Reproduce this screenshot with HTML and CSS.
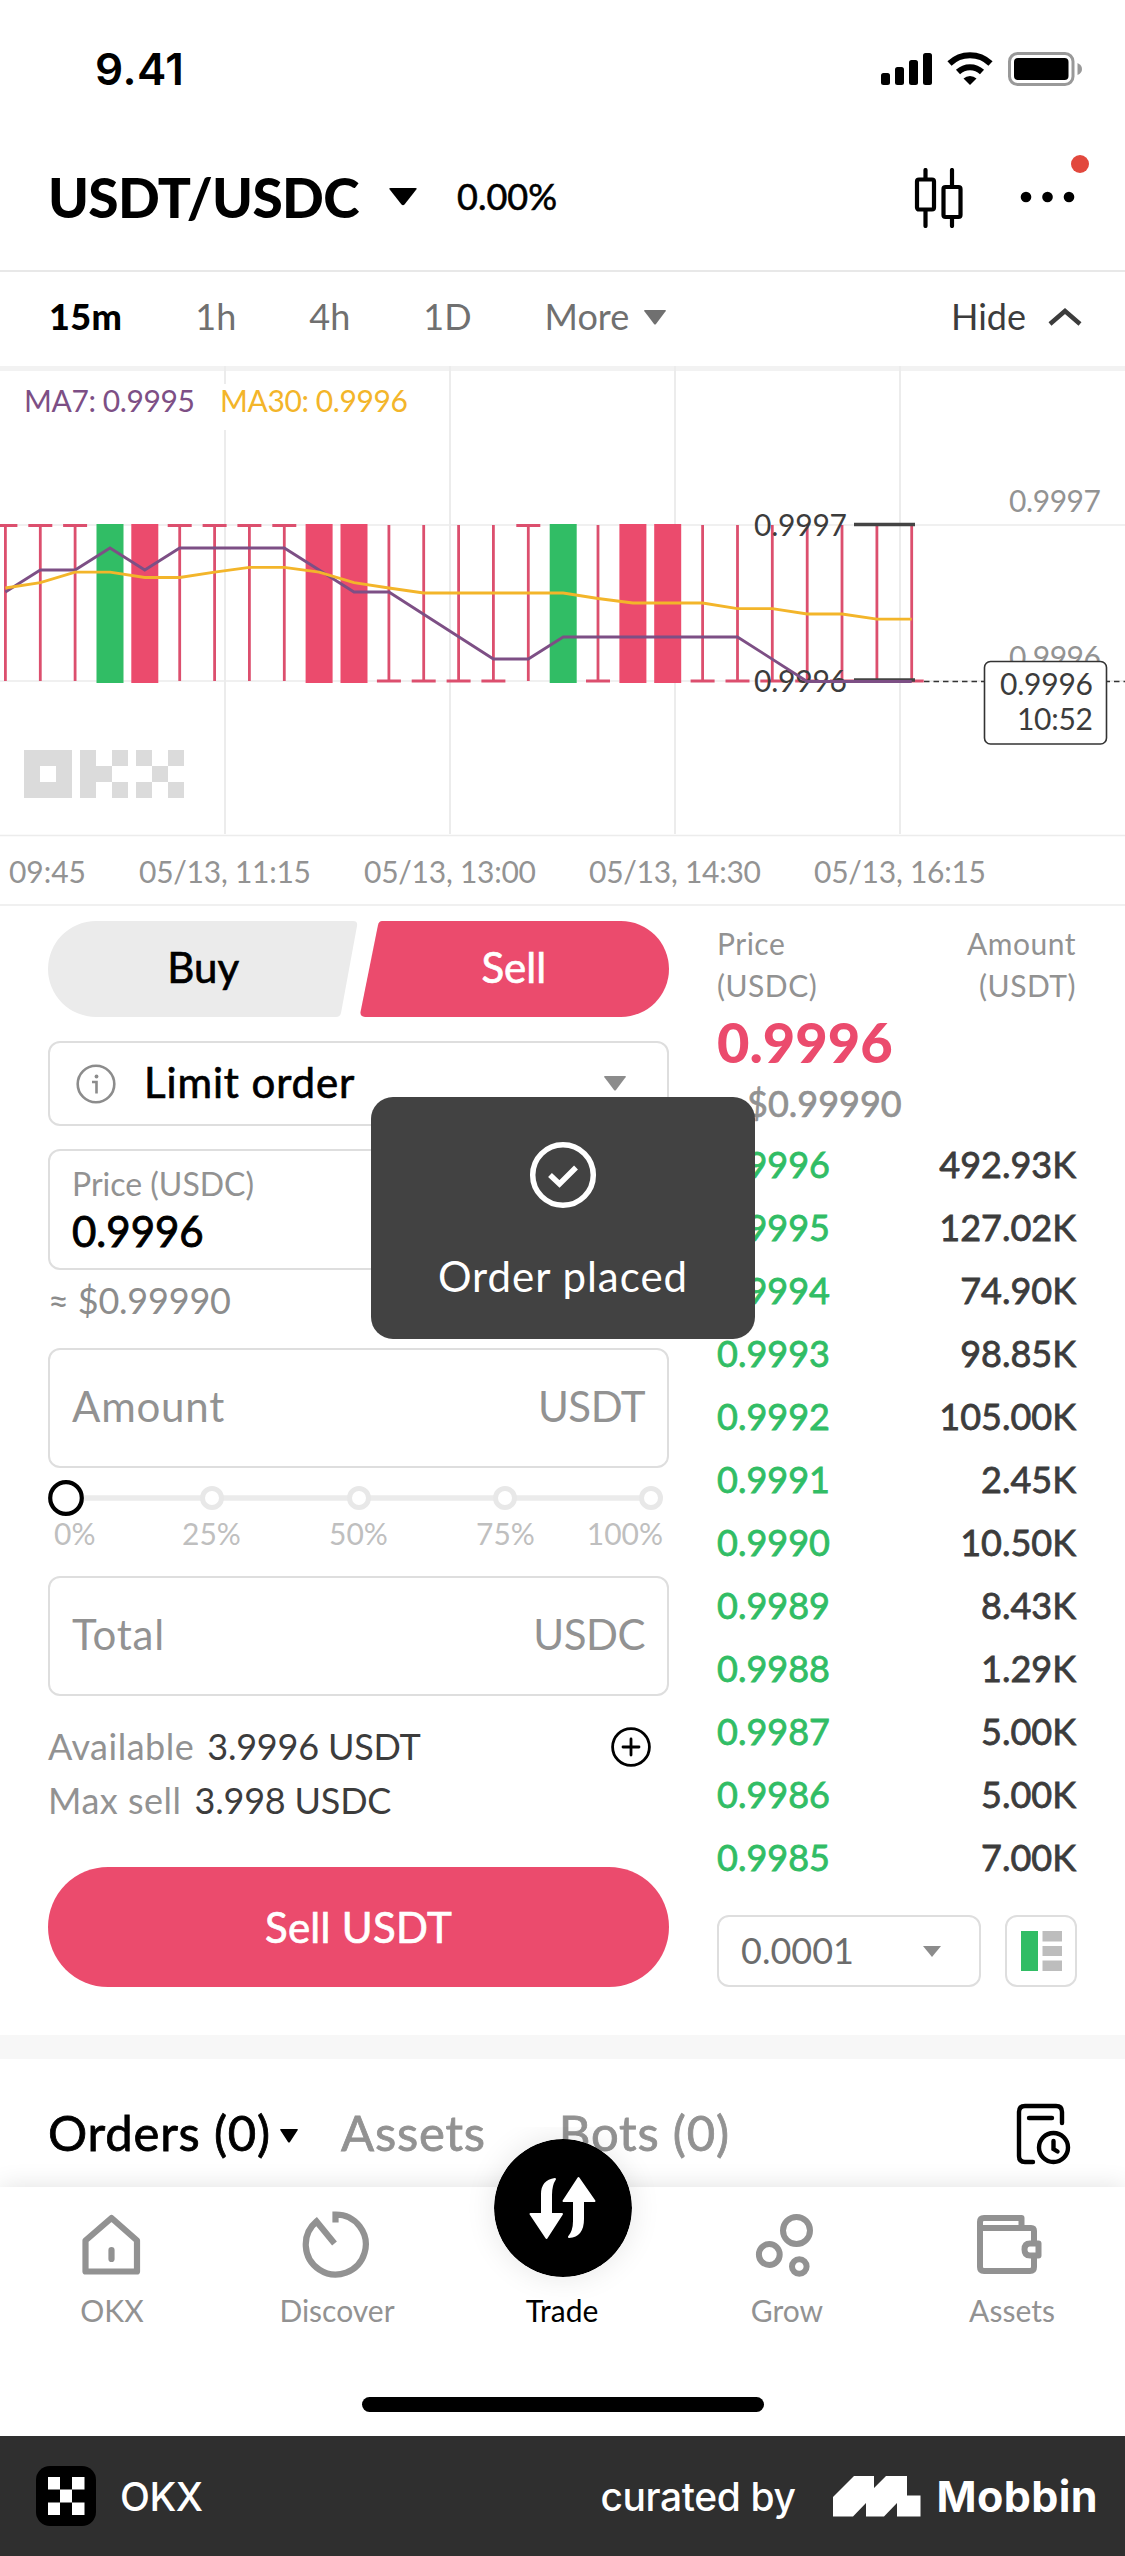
FILE: index.html
```html
<!DOCTYPE html>
<html lang="en">
<head>
  <meta charset="UTF-8">
  <title>USDT/USDC</title>
  <link rel="stylesheet" href="styles.css">
</head>
<body>
  <div class="status-bar">
    <span class="time">9.41</span>
    <svg class="status-icons" width="202" height="36" viewBox="0 0 202 36">
      <rect x="1" y="22" width="9" height="12" rx="2.5"/>
      <rect x="15" y="16" width="9" height="18" rx="2.5"/>
      <rect x="29" y="9" width="9" height="25" rx="2.5"/>
      <rect x="43" y="2" width="9" height="32" rx="2.5"/>
      <g fill="none" stroke="#000" stroke-width="6">
        <path d="M69.5 12.5a29.500 29.500 0 0 1 41 0"/>
        <path d="M78 21a17.500 17.500 0 0 1 24 0"/>
      </g>
      <path d="M83.500 27.500a9.500 9.500 0 0 1 13 0L90 34z"/>
      <rect x="129.500" y="2.500" width="63.500" height="31" rx="8" fill="none" stroke="#999" stroke-width="3"/>
      <rect x="134" y="7" width="54.500" height="22" rx="4"/>
      <path d="M197.500 12q4.500 2 4.500 6t-4.500 6z" fill="#999"/>
    </svg>
  </div>

  <header class="pair-header">
    <h1>USDT/USDC</h1>
    <svg class="pair-arrow" width="28" height="18" viewBox="0 0 28 18"><path d="M1.500 0h25q2 0 .8 1.600L15.500 16.500q-1.500 1.500-3 0L.7 1.600Q-.5 0 1.500 0z"/></svg>
    <span class="change">0.00%</span>
    <svg class="candle-icon" width="50" height="60" viewBox="0 0 50 60" fill="none" stroke="#000" stroke-width="4.200" stroke-linecap="round">
      <rect x="3" y="11.500" width="17" height="30" rx="2"/>
      <rect x="29.500" y="19" width="17" height="30" rx="2"/>
      <path d="M11.500 2v9M11.500 42v16M38 2v17M38 49v9"/>
    </svg>
    <svg class="more-icon" width="70" height="54" viewBox="0 0 70 54">
      <circle cx="7" cy="42" r="5.300"/>
      <circle cx="28.500" cy="42" r="5.300"/>
      <circle cx="50" cy="42" r="5.300"/>
      <circle cx="61" cy="9" r="9" fill="#e2483d"/>
    </svg>
  </header>

  <nav class="intervals">
    <span class="active">15m</span>
    <span>1h</span>
    <span>4h</span>
    <span>1D</span>
    <span>More</span>
    <svg class="more-arrow" width="22" height="15" viewBox="0 0 22 15"><path d="M1 0h20q1.500 0 .6 1.300L12 14q-1 1.200-2 0L.4 1.300Q-.5 0 1 0z" fill="#707070"/></svg>
    <span class="hide">Hide</span>
    <svg class="chevron" width="34" height="18" viewBox="0 0 34 18"><path d="M2 16 17 3l15 13" fill="none" stroke="#3c3c3c" stroke-width="4.500"/></svg>
  </nav>

  <svg class="chart" width="1125" height="540" viewBox="0 366 1125 540">
    <defs>
      <g id="top"><path d="M0 525V681" stroke-width="2.800"/><path d="M-12 525.500H12" stroke-width="3"/></g>
      <g id="low"><path d="M0 525V681" stroke-width="2.800"/><path d="M-12 681H12" stroke-width="3"/></g>
      <rect id="body" x="-13.500" y="524" width="27" height="159" stroke="none"/>
    </defs>
    <rect y="366" width="1125" height="5" fill="#f2f2f2"/>
    <!-- grid -->
    <g stroke="#ececec" stroke-width="2">
      <path d="M225 366V834M450 366V834M675 366V834M900 366V834"/>
      <path d="M0 525H1125M0 681H1125M0 835.500H1125M0 905H1125" stroke-width="1.500"/>
    </g>
    <rect x="14" y="384" width="404" height="46" fill="#fff"/>
    <g class="label">
      <text x="24" y="412" textLength="171" fill="#7d4f85">MA7: 0.9995</text>
      <text x="220" y="412" textLength="188" fill="#f3b52a">MA30: 0.9996</text>
    </g>
    <!-- watermark -->
    <path fill="#dbdbdb" fill-rule="evenodd" d="M24 750h48v48H24zM40 766v16h16v-16zM80 750h16v16h16v16H96v16H80zM112 750h16v16h-16zM112 782h16v16h-16zM136 750h16v16h-16zM168 750h16v16h-16zM152 766h16v16h-16zM136 782h16v16h-16zM168 782h16v16h-16z"/>
    <!-- candles -->
    <g stroke="#dc4f6e" fill="#eb4b6d">
      <use href="#top" x="5.400"/>
      <use href="#top" x="40.300"/>
      <use href="#top" x="75.100"/>
      <use href="#body" x="110" fill="#31bd65"/>
      <use href="#body" x="144.800"/>
      <use href="#top" x="179.700"/>
      <use href="#top" x="214.600"/>
      <use href="#top" x="249.400"/>
      <use href="#top" x="284.300"/>
      <use href="#body" x="319.100"/>
      <use href="#body" x="354"/>
      <use href="#low" x="388.900"/>
      <use href="#low" x="423.700"/>
      <use href="#low" x="458.600"/>
      <use href="#low" x="493.400"/>
      <use href="#top" x="528.300"/>
      <use href="#body" x="563.200" fill="#31bd65"/>
      <use href="#low" x="598"/>
      <use href="#body" x="632.900"/>
      <use href="#body" x="667.700"/>
      <use href="#low" x="702.600"/>
      <use href="#low" x="737.500"/>
      <use href="#low" x="772.300"/>
      <use href="#low" x="807.200"/>
      <use href="#low" x="842"/>
      <use href="#low" x="876.900"/>
      <use href="#low" x="911.700"/>
    </g>
    <g class="label" fill="#3c3c3c">
      <text x="754" y="536" textLength="93">0.9997</text>
      <text x="754" y="692" textLength="93">0.9996</text>
    </g>
    <path d="M854 524.500H915M854 680H915" stroke="#444" stroke-width="3.500"/>
    <polyline fill="none" stroke="#7d4f85" stroke-width="2.800" points="5.400,592 40.300,570 75.100,570 110,548 144.800,570 179.700,548 284.300,548 354,592 388.900,592 493.400,659 528.300,659 563.200,637 737.500,637 807.200,681.500 911.700,681.500"/>
    <polyline fill="none" stroke="#f3b52a" stroke-width="2.800" points="5.400,588 40.300,582.700 75.100,572.200 110,572.200 144.800,577.500 179.700,577.500 214.600,572.200 249.400,567.300 284.300,567.300 319.100,572.200 354,582.700 388.900,588 423.700,593 563.200,593 598,598.500 632.900,603 702.600,603 737.500,608.700 772.300,608.700 807.200,614 842,614 876.900,619.200 911.700,619.200"/>
    <!-- price axis -->
    <g class="label" fill="#939393">
      <text x="1009" y="512" textLength="92">0.9997</text>
      <text x="1009" y="668" textLength="92">0.9996</text>
    </g>
    <path d="M924 681.500H1125" stroke="#333" stroke-width="1.500" stroke-dasharray="5.500 4"/>
    <rect x="984.500" y="661.500" width="122" height="82.500" rx="6" fill="#fff" stroke="#333" stroke-width="1.600"/>
    <g class="label" fill="#3c3c3c">
      <text x="1000" y="694.500" textLength="93">0.9996</text>
      <text x="1017" y="729.500" textLength="76">10:52</text>
    </g>
    <!-- time axis -->
    <g class="label" fill="#939393">
      <text x="9" y="883" textLength="77">09:45</text>
      <text x="139" y="883" textLength="172">05/13, 11:15</text>
      <text x="364" y="883" textLength="172">05/13, 13:00</text>
      <text x="589" y="883" textLength="172">05/13, 14:30</text>
      <text x="814" y="883" textLength="172">05/13, 16:15</text>
    </g>
  </svg>

  <main class="trade">
    <section class="form">
      <div class="side-toggle">
        <svg class="toggle-shape" width="621" height="96" viewBox="0 0 621 96">
          <path d="M48 0H305q5 0 4 5L293 92q-1 4-5 4H48A48 48 0 0 1 48 0z" fill="#ebebeb"/>
          <path d="M334 0H573a48 48 0 0 1 0 96H317q-5 0-4.500-5L330 4q1-4 4-4z" fill="#eb4b6d"/>
        </svg>
        <span class="buy">Buy</span>
        <span class="sell">Sell</span>
      </div>

      <div class="field order-type">
        <svg width="40" height="40" viewBox="0 0 40 40" fill="none" stroke="#8c8c8c" stroke-width="2.600">
          <circle cx="20" cy="20" r="18.300"/>
          <path d="M16 18h4.500v11.500"/>
          <circle cx="20.500" cy="12.500" r="1.900" fill="#8c8c8c" stroke="none"/>
        </svg>
        <span>Limit order</span>
        <svg class="drop" width="22" height="15" viewBox="0 0 22 15"><path d="M1 0h20q1.500 0 .6 1.300L12 14q-1 1.200-2 0L.4 1.300Q-.5 0 1 0z" fill="#8c8c8c"/></svg>
      </div>

      <div class="field price">
        <label>Price (USDC)</label>
        <strong>0.9996</strong>
      </div>
      <div class="approx">≈ $0.99990</div>

      <div class="field amount"><span class="name">Amount</span><span class="unit">USDT</span></div>

      <div class="slider">
        <svg width="621" height="38" viewBox="0 0 621 38">
          <path d="M36 19H603" stroke="#ebebeb" stroke-width="5.500"/>
          <g fill="#fff" stroke="#e8e8e8" stroke-width="5">
            <circle cx="164" cy="19" r="9.500"/>
            <circle cx="311" cy="19" r="9.500"/>
            <circle cx="457" cy="19" r="9.500"/>
            <circle cx="603" cy="19" r="9.500"/>
          </g>
          <circle cx="18" cy="19" r="15.800" fill="#fff" stroke="#000" stroke-width="4.200"/>
        </svg>
        <div class="steps"><span>0%</span><span>25%</span><span>50%</span><span>75%</span><span>100%</span></div>
      </div>

      <div class="field total"><span class="name">Total</span><span class="unit">USDC</span></div>

      <div class="balance">
        <span>Available</span><b>3.9996 USDT</b>
        <svg width="40" height="40" viewBox="0 0 40 40" fill="none" stroke="#000" stroke-width="2.800" stroke-linecap="round">
          <circle cx="20" cy="20" r="18.400"/>
          <path d="M12 20h16M20 12v16"/>
        </svg>
      </div>
      <div class="balance"><span>Max sell</span><b>3.998 USDC</b></div>

      <button class="submit">Sell USDT</button>
    </section>

    <section class="book">
      <div class="book-head"><span>Price<br>(USDC)</span><span>Amount<br>(USDT)</span></div>
      <div class="last-price">0.9996</div>
      <div class="last-usd">≈ $0.99990</div>
      <div class="row"><span>0.9996</span><span>492.93K</span></div>
      <div class="row"><span>0.9995</span><span>127.02K</span></div>
      <div class="row"><span>0.9994</span><span>74.90K</span></div>
      <div class="row"><span>0.9993</span><span>98.85K</span></div>
      <div class="row"><span>0.9992</span><span>105.00K</span></div>
      <div class="row"><span>0.9991</span><span>2.45K</span></div>
      <div class="row"><span>0.9990</span><span>10.50K</span></div>
      <div class="row"><span>0.9989</span><span>8.43K</span></div>
      <div class="row"><span>0.9988</span><span>1.29K</span></div>
      <div class="row"><span>0.9987</span><span>5.00K</span></div>
      <div class="row"><span>0.9986</span><span>5.00K</span></div>
      <div class="row"><span>0.9985</span><span>7.00K</span></div>
      <div class="book-tools">
        <div class="depth">
          <span>0.0001</span>
          <svg width="18" height="11" viewBox="0 0 18 11"><path d="M0 0h18L9 11z" fill="#8c8c8c"/></svg>
        </div>
        <div class="view">
          <svg width="41" height="40" viewBox="0 0 41 40">
            <rect width="17" height="40" fill="#31bd65"/>
            <path d="M21.500 0H41v10.500H21.500zM21.500 15H41v10H21.500zM21.500 29.500H41V40H21.500z" fill="#bdbdbd"/>
          </svg>
        </div>
      </div>
    </section>

    <div class="toast">
      <svg width="68" height="68" viewBox="0 0 68 68" fill="none" stroke="#fff" stroke-width="5.500">
        <circle cx="34" cy="34" r="30.300"/>
        <path d="M21 34l9.500 9L47 26.500"/>
      </svg>
      <span>Order placed</span>
    </div>
  </main>

  <section class="orders">
    <span class="current">Orders (0)</span>
    <svg class="orders-arrow" width="18" height="14" viewBox="0 0 18 14"><path d="M1 0h16q1.500 0 .6 1.300L10 13q-1 1.200-2 0L.4 1.300Q-.5 0 1 0z"/></svg>
    <span class="assets">Assets</span>
    <span class="bots">Bots (0)</span>
    <svg class="history" width="56" height="62" viewBox="0 0 56 62" fill="none" stroke="#000" stroke-width="4.400" stroke-linecap="round">
      <path d="M46 20V9q0-6-6-6H9Q3 3 3 9v44q0 6 6 6h8"/>
      <path d="M13 15h23"/>
      <circle cx="37.500" cy="44.500" r="14.500"/>
      <path d="M37.500 38v8l4 2.500"/>
    </svg>
  </section>

  <nav class="tab-bar">
    <a>
      <svg width="70" height="70" viewBox="0 0 70 70" fill="none" stroke="#929292" stroke-width="6.200" stroke-linejoin="round">
        <path d="M9.500 31.500 35.500 9l25.500 22.500V62.500H9.500z"/>
        <path d="M35.500 41v9" stroke-linecap="round"/>
      </svg>
      <span>OKX</span>
    </a>
    <a>
      <svg width="70" height="70" viewBox="0 0 70 70" fill="none" stroke="#929292" stroke-width="6.200">
        <path d="M34.500 13.500V5.500A30 30 0 1 1 15.500 12.500L33.500 34.500"/>
      </svg>
      <span>Discover</span>
    </a>
    <a class="trade-tab">
      <svg width="138" height="138" viewBox="0 0 138 138">
        <circle cx="69" cy="69" r="69"/>
        <g fill="#fff" stroke="#fff" stroke-width="2" stroke-linejoin="round">
          <path d="M61 40Q48 42 48 55V75H36.500L52.500 99 68 75H57V56Q57 46 61 40z"/>
          <path d="M84.500 39 100.500 62H89V80Q89 97 75 98Q80 92 80 82V62H69.500z"/>
        </g>
      </svg>
      <span>Trade</span>
    </a>
    <a>
      <svg width="70" height="70" viewBox="0 0 70 70" fill="none" stroke="#929292" stroke-width="6">
        <circle cx="45.500" cy="21.500" r="13.500"/>
        <circle cx="18.300" cy="45.500" r="10.400"/>
        <circle cx="48.300" cy="57.500" r="7.300"/>
      </svg>
      <span>Grow</span>
    </a>
    <a>
      <svg width="70" height="70" viewBox="0 0 70 70" fill="none" stroke="#929292" stroke-width="6" stroke-linejoin="round">
        <path d="M4 21V13q0-4 4-4H45.500V19"/>
        <path d="M58 33V22q0-3-3-3H4V58q0 4 4 4H54q4 0 4-4V48"/>
        <path d="M62.500 34.500H54q-5.500 0-5.500 6t5.500 6h8.500z"/>
      </svg>
      <span>Assets</span>
    </a>
  </nav>
  <div class="home-indicator"></div>

  <footer>
    <svg width="60" height="60" viewBox="0 0 60 60">
      <rect width="60" height="60" rx="14"/>
      <path fill="#fff" d="M12 11h12v12.500H12zM36 11h12.500v12.500H36zM24 23.500h12v13H24zM12 36.500h12V49H12zM36 36.500h12.500V49H36z"/>
    </svg>
    <span class="app-name">OKX</span>
    <span class="curated">curated by</span>
    <svg class="mobbin-logo" width="88" height="41" viewBox="0 0 88 41"><path fill="#fff" d="M0 21 21 0H41V12L53 0H74V19.500H87.500V40.500H64V27L51 40.500H33V27L20 40.500H0z"/></svg>
    <span class="mobbin">Mobbin</span>
  </footer>
</body>
</html>
```
FILE: styles.css
```css
* {
  box-sizing: border-box;
}

body {
  margin: 0;
  width: 1125px;
  height: 2556px;
  overflow: hidden;
  background: #fff;
  color: #000;
  font-family: Lato, "Open Sans", sans-serif;
  font-size: 36px;
  line-height: 1.2;
  display: flex;
  flex-direction: column;
}

body > * {
  flex-shrink: 0;
}

svg {
  display: block;
  flex-shrink: 0;
}

/* Status bar */
.status-bar {
  height: 138px;
  padding: 0 43px 0 95px;
  display: flex;
  align-items: center;
  justify-content: space-between;
}

.time {
  font-family: Inter, sans-serif;
  font-size: 44px;
  font-weight: 600;
  letter-spacing: 0.5px;
}

/* Pair header */
.pair-header {
  height: 132px;
  padding-left: 48px;
  display: flex;
  align-items: center;
}

h1 {
  margin: -15px 0 0;
  font-size: 55px;
  font-weight: 900;
  letter-spacing: -0.7px;
  width: 341px;
}

.pair-arrow {
  margin: -14px 40px 0 0;
}

.change {
  margin-top: -14px;
  -webkit-text-stroke: 0.6px;
}

.candle-icon {
  margin: -12px 0 0 auto;
}

.more-icon {
  margin: -44px 36px 0 55px;
}

/* Intervals */
.intervals {
  height: 96px;
  border-top: 2px solid #e8e8e8;
  padding: 0 43px 4px 49px;
  display: flex;
  align-items: center;
  color: #707070;
}

.intervals span {
  margin-right: 73px;
}

.intervals .active {
  color: #000;
  font-weight: 900;
  letter-spacing: 0.4px;
}

.intervals .more-arrow {
  margin-left: -58px;
}

.intervals .hide {
  margin: 0 22px 0 auto;
  color: #3c3c3c;
}

/* Chart */
.label {
  font-size: 30px;
}

/* Order form */
.trade {
  position: relative;
  height: 1129px;
  padding: 15px 48px 0;
  display: flex;
  justify-content: space-between;
}

.form {
  width: 621px;
}

.side-toggle {
  position: relative;
  height: 96px;
  display: flex;
  align-items: center;
  padding-bottom: 3px;
  font-size: 42px;
  -webkit-text-stroke: 0.7px;
}

.toggle-shape {
  position: absolute;
  left: 0;
  top: 0;
}

.side-toggle span {
  position: relative;
  width: 311px;
  text-align: center;
}

.side-toggle .sell {
  color: #fff;
}

.field {
  border: 2px solid #dedede;
  border-radius: 12px;
  display: flex;
  align-items: center;
  justify-content: space-between;
  padding: 0 22px;
  font-size: 42px;
  color: #929292;
}

.order-type {
  height: 85px;
  margin-top: 24px;
  color: #000;
}

.order-type svg:first-child {
  margin-left: 4px;
}

.order-type span {
  margin: 0 0 3px 28px;
  letter-spacing: 0.9px;
  -webkit-text-stroke: 0.7px;
}

.order-type .drop {
  margin: 0 19px 0 auto;
}

.price {
  height: 121px;
  margin-top: 23px;
  flex-direction: column;
  align-items: flex-start;
  justify-content: center;
}

.price label {
  font-size: 32px;
  line-height: 42px;
}

.price strong {
  font-weight: 400;
  line-height: 52px;
  color: #000;
  -webkit-text-stroke: 0.9px;
}

.approx {
  margin-top: 8px;
  margin-bottom: 26px;
  line-height: 44px;
  letter-spacing: -0.2px;
  color: #8c8c8c;
}

.amount,
.total {
  height: 120px;
  padding-bottom: 3px;
}

.field .name {
  letter-spacing: 0.8px;
}

.field .unit {
  letter-spacing: -0.5px;
}

.slider {
  height: 108px;
  padding-top: 11px;
}

.steps {
  display: grid;
  grid-template-columns: 90px 147px 147px 147px 1fr;
  text-align: center;
  font-size: 30px;
  line-height: 32px;
  color: #bfbfbf;
}

.steps span:first-child {
  text-align: left;
  padding-left: 6px;
}

.steps span:last-child {
  text-align: right;
  padding-right: 6px;
}

.total {
  margin-bottom: 24px;
}

.balance {
  height: 54px;
  display: flex;
  align-items: center;
  color: #929292;
}

.balance span {
  letter-spacing: 0.5px;
}

.balance b {
  font-weight: 400;
  letter-spacing: -0.2px;
  color: #3c3c3c;
  margin-left: 13px;
}

.balance svg {
  margin: 0 18px 0 auto;
}

.submit {
  display: block;
  width: 621px;
  height: 120px;
  margin-top: 39px;
  border: none;
  border-radius: 60px;
  background: #eb4b6d;
  color: #fff;
  font: 400 42px Lato, sans-serif;
  letter-spacing: 0.3px;
  -webkit-text-stroke: 0.7px;
}

/* Order book */
.book {
  width: 360px;
  padding-right: 1px;
}

.book-head {
  display: flex;
  justify-content: space-between;
  font-size: 30px;
  line-height: 42px;
  letter-spacing: 0.5px;
  color: #929292;
  margin-top: 1px;
}

.book-head span:last-child {
  text-align: right;
}

.last-price {
  margin-top: 4px;
  height: 64px;
  font-size: 56px;
  line-height: 64px;
  font-weight: 900;
  color: #eb4b6d;
}

.last-usd {
  height: 59px;
  line-height: 58px;
  color: #929292;
  -webkit-text-stroke: 0.7px;
}

.row {
  display: flex;
  justify-content: space-between;
  height: 63px;
  line-height: 63px;
  color: #3c3c3c;
  -webkit-text-stroke: 0.8px;
}

.row span:first-child {
  color: #31bd65;
}

.book-tools {
  display: flex;
  justify-content: space-between;
  margin: 26px -1px 0 0;
}

.depth,
.view {
  height: 72px;
  border: 2px solid #dedede;
  border-radius: 12px;
  display: flex;
  align-items: center;
}

.depth {
  width: 264px;
  padding: 0 38px 0 22px;
  justify-content: space-between;
  color: #6c6c6c;
}

.view {
  width: 72px;
  justify-content: center;
}

/* Toast */
.toast {
  position: absolute;
  left: 371px;
  top: 191px;
  width: 384px;
  height: 242px;
  border-radius: 22px;
  background: #424242;
  color: #fff;
  display: flex;
  flex-direction: column;
  align-items: center;
  padding-top: 44px;
  font-size: 42px;
}

.toast span {
  margin-top: 42px;
  letter-spacing: 1px;
}

/* Orders */
.orders {
  height: 152px;
  border-top: 24px solid #f7f7f7;
  padding: 22px 53px 0 48px;
  display: flex;
  align-items: center;
  font-size: 49px;
  color: #929292;
}

.orders span {
  margin-top: -3px;
  letter-spacing: 0.8px;
  -webkit-text-stroke: 0.8px;
}

.orders .current {
  color: #000;
}

.orders-arrow {
  margin: 4px 43px 0 9px;
}

.orders .assets {
  margin-right: 73px;
}

.orders .history {
  margin-left: auto;
}

/* Tab bar */
.tab-bar {
  position: relative;
  height: 210px;
  background: #fff;
  box-shadow: 0 0 24px rgba(0, 0, 0, 0.12);
  clip-path: inset(-60px 0 0 0);
  display: flex;
  font-size: 30px;
  color: #929292;
}

.tab-bar a {
  flex: 1;
  display: flex;
  flex-direction: column;
  align-items: center;
  padding-top: 22px;
}

.tab-bar a svg {
  margin-left: -3px;
}

.tab-bar span {
  margin-top: 13px;
  margin-left: -1px;
}

.tab-bar .trade-tab {
  padding-top: 0;
  margin-top: -48px;
  color: #000;
}

.tab-bar .trade-tab svg {
  margin-left: 0;
  border-radius: 50%;
  box-shadow: 0 0 30px rgba(0, 0, 0, 0.1);
}

.trade-tab span {
  margin-top: 15px;
}

.home-indicator {
  width: 402px;
  height: 15px;
  margin: 0 auto 24px;
  border-radius: 8px;
  background: #000;
}

footer {
  height: 120px;
  padding: 0 27px 0 36px;
  background: #2f2f2f;
  color: #fff;
  font: 500 39px Inter, sans-serif;
  display: flex;
  align-items: center;
}

.app-name {
  margin-left: 24px;
  letter-spacing: -0.5px;
}

.curated {
  margin: 0 37px 0 auto;
  letter-spacing: -0.4px;
}

.mobbin {
  margin-left: 16px;
  font-size: 43px;
  font-weight: 700;
  letter-spacing: 0.4px;
}
```
